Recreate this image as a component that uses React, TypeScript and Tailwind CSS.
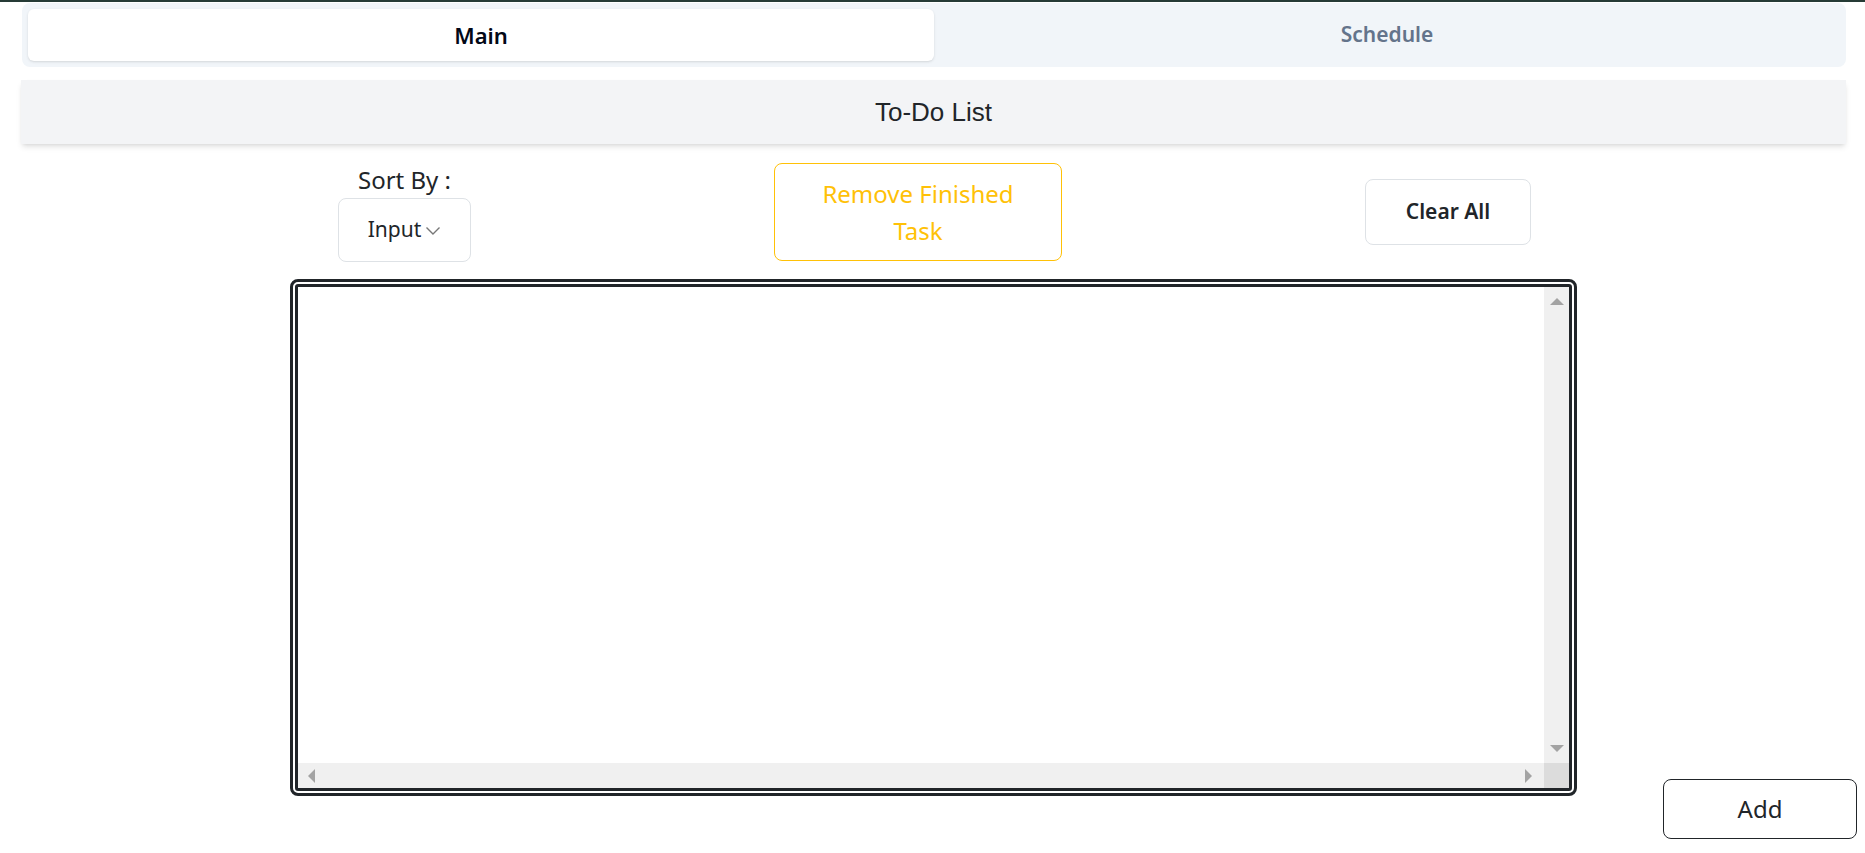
import { useState } from "react";

const sans = "font-['Noto_Sans','Open_Sans',sans-serif]";

function Tabs() {
  const [tab, setTab] = useState("main");
  return (
    <div className="ml-[22px] mr-[19px] mt-px grid grid-cols-2 rounded-lg bg-[#f1f5f9] p-1.5">
      <button
        onClick={() => setTab("main")}
        className={
          tab === "main"
            ? "h-[52px] rounded-md bg-white text-[22px] font-semibold text-[#020817] shadow-sm"
            : "h-[52px] rounded-md text-[22px] font-semibold text-[#64748b]"
        }
      >
        Main
      </button>
      <button
        onClick={() => setTab("schedule")}
        className={
          tab === "schedule"
            ? "h-[52px] rounded-md bg-white text-[22px] font-semibold text-[#020817] shadow-sm"
            : "h-[52px] rounded-md text-[21px] font-semibold text-[#64748b]"
        }
      >
        Schedule
      </button>
    </div>
  );
}

export default function App() {
  const [text, setText] = useState("");

  return (
    <main className={`min-h-screen bg-white text-[#212529] ${sans}`}>
      <div className="h-[2px] bg-[#263b36]" />

      <Tabs />

      <div className="ml-[21px] mr-[19px] mt-[13px] flex h-[64px] items-center justify-center bg-[#f3f4f6] shadow-md">
        <h1 className="font-['Liberation_Sans',Arial,sans-serif] text-[26px] text-[#212529]">
          To-Do List
        </h1>
      </div>

      <div className="mt-[18px] flex items-center justify-center gap-[303px] pl-[4px]">
        <div className="flex w-[133px] flex-col items-center">
          <span className="text-[24px] leading-[36px]">Sort By :</span>
          <div className="flex h-[64px] w-[133px] items-center justify-center gap-1 rounded-lg border border-[#dee2e6] bg-white text-[21px]">
            <span>Input</span>
            <svg width="16" height="10" viewBox="0 0 16 10" fill="none" className="mt-0.5">
              <path d="M1.5 1.5 L8 8 L14.5 1.5" stroke="#777" strokeWidth="1.4" />
            </svg>
          </div>
        </div>

        <button className="h-[98px] w-[288px] rounded-lg border border-[#ffc107] px-10 text-[24px] leading-[37px] text-[#ffc107]">
          Remove Finished Task
        </button>

        <button className="h-[66px] w-[166px] rounded-lg border border-[#dee2e6] text-[21px] font-semibold text-[#212529]">
          Clear All
        </button>
      </div>

      <div className="mt-[17px] grid grid-cols-[1fr_auto_1fr]">
        <div />
        {/* task box: double outline, classic scrollbars */}
        <div className="mb-[43px] ml-[2px] h-[517px] w-[1287px] rounded-lg border-[3px] border-[#212529] bg-white p-[2px]">
          <div className="grid h-full w-full grid-cols-[1fr_25px] grid-rows-[1fr_25px] overflow-hidden rounded-[3px] border-[3px] border-[#212529]">
            <textarea
              value={text}
              onChange={(e) => setText(e.target.value)}
              wrap="off"
              className="h-full w-full resize-none overflow-hidden bg-white p-1 text-[20px] outline-none"
            />
            <div className="flex flex-col items-center justify-between bg-[#f0f0f0] py-[11px]">
              <span className="border-x-[7px] border-b-[7px] border-x-transparent border-b-[#a3a3a3]" />
              <span className="border-x-[7px] border-t-[7px] border-x-transparent border-t-[#a3a3a3]" />
            </div>
            <div className="flex items-center justify-between bg-[#f0f0f0] pl-[10px] pr-[12px]">
              <span className="border-y-[7px] border-r-[7px] border-y-transparent border-r-[#a3a3a3]" />
              <span className="border-y-[7px] border-l-[7px] border-y-transparent border-l-[#a3a3a3]" />
            </div>
            <div className="bg-[#dcdcdc]" />
          </div>
        </div>
        <div className="flex items-end justify-end">
          <button className="mr-2 h-[60px] w-[194px] rounded-lg border border-[#212529] bg-white text-[24px] text-[#212529]">
            Add
          </button>
        </div>
      </div>
    </main>
  );
}
